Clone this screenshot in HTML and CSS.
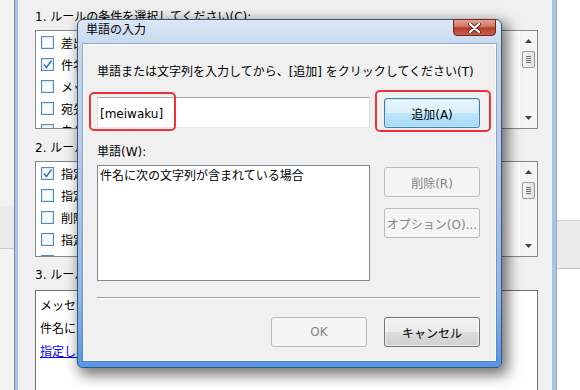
FILE: index.html
```html
<!DOCTYPE html>
<html lang="ja">
<head>
  <meta charset="UTF-8">
  <title>仕分けルール - 単語の入力</title>
  <link rel="stylesheet" href="styles.css">
</head>
<body>

<div class="screen">
  <div class="edge edge-left"><div class="band band-left"></div></div>

  <div class="parent">
    <div class="parent-inner">
      <p class="step">1. ルールの条件を選択してください(C):</p>
      <div class="listbox list-conditions">
        <ul class="items">
          <li><span class="check"></span>差出人が [名前/パブリック グループ] の場合</li>
          <li><span class="check"><svg width="11" height="11" viewBox="0 0 11 11"><path d="M2 5.5 L4.5 8.5 L9.5 1.5" fill="none" stroke="#3d68b0" stroke-width="1.4"/></svg></span>件名に [特定の文字] が含まれる場合</li>
          <li><span class="check"></span>メッセージ本文に [特定の文字] が含まれる場合</li>
          <li><span class="check"></span>宛先に [名前/パブリック グループ] が含まれる場合</li>
          <li><span class="check"></span>自分だけに送信された場合</li>
        </ul>
        <div class="vscroll">
          <div class="arrow"><svg width="7" height="4" viewBox="0 0 7 4"><path d="M0 4 L3.5 0 L7 4 Z" fill="#444"/></svg></div>
          <div class="track"><div class="thumb"></div></div>
          <div class="arrow"><svg width="7" height="4" viewBox="0 0 7 4"><path d="M0 0 L3.5 4 L7 0 Z" fill="#444"/></svg></div>
        </div>
      </div>

      <p class="step step-next">2. ルールの処理を選択してください(W):</p>
      <div class="listbox list-actions">
        <ul class="items">
          <li><span class="check"><svg width="11" height="11" viewBox="0 0 11 11"><path d="M2 5.5 L4.5 8.5 L9.5 1.5" fill="none" stroke="#3d68b0" stroke-width="1.4"/></svg></span>指定フォルダへ移動する</li>
          <li><span class="check"></span>指定フォルダへコピーする</li>
          <li><span class="check"></span>削除する</li>
          <li><span class="check"></span>指定した人または配布リストに転送する</li>
          <li><span class="check"></span>指定した人に添付ファイルとして転送する</li>
        </ul>
        <div class="vscroll">
          <div class="arrow"><svg width="7" height="4" viewBox="0 0 7 4"><path d="M0 4 L3.5 0 L7 4 Z" fill="#444"/></svg></div>
          <div class="track"><div class="thumb"></div></div>
          <div class="arrow"><svg width="7" height="4" viewBox="0 0 7 4"><path d="M0 0 L3.5 4 L7 0 Z" fill="#444"/></svg></div>
        </div>
      </div>

      <p class="step step-next">3. ルールの説明を編集してください (下線部をクリックして編集します)(D):</p>
      <div class="summary">
        <p>メッセージ受信時にルールを適用する</p>
        <p>件名に <a href="#">特定の文字</a> が含まれる場合</p>
        <p><a href="#">指定したフォルダー</a> へ移動する</p>
      </div>
    </div>
  </div>

  <div class="edge edge-right"><div class="band band-right"></div></div>

  <div class="dialog">
    <div class="titlebar">
      <span class="title">単語の入力</span>
      <button class="close">
        <svg width="13" height="10" viewBox="0 0 13 10">
          <path d="M2 1 L11 9 M11 1 L2 9" stroke="#5a2a22" stroke-width="4" stroke-linecap="round"/>
          <path d="M2 1 L11 9 M11 1 L2 9" stroke="#fff" stroke-width="2.2" stroke-linecap="round"/>
        </svg>
      </button>
    </div>

    <div class="client">
      <p class="prompt">単語または文字列を入力してから、[追加] をクリックしてください(T)</p>

      <div class="entry-row">
        <div class="marked">
          <input class="textbox" type="text" value="[meiwaku]">
          <span class="mark mark-input"></span>
        </div>
        <div class="marked">
          <button class="btn btn-default">追加(A)</button>
          <span class="mark mark-add"></span>
        </div>
      </div>

      <p class="words-label">単語(W):</p>
      <div class="list-row">
        <div class="wordlist">件名に次の文字列が含まれている場合</div>
        <div class="side-buttons">
          <button class="btn" disabled>削除(R)</button>
          <button class="btn" disabled>オプション(O)...</button>
        </div>
      </div>

      <div class="separator"></div>

      <div class="footer">
        <button class="btn" disabled>OK</button>
        <button class="btn">キャンセル</button>
      </div>
    </div>
  </div>
</div>

</body>
</html>
```

FILE: styles.css
```css
* { box-sizing: border-box; }

body {
  margin: 0;
  background-color: #f4f4f4;
  font-family: "DejaVu Sans", "Noto Sans CJK JP", sans-serif;
  font-size: 12px;
  color: #000;
}

p { margin: 0; }

.screen {
  position: relative;
  display: flex;
  width: 580px;
  height: 390px;
  overflow: hidden;
}

/* desktop behind the rules window */
.edge-left { width: 14px; background: #f3f3f3; }
.edge-right { flex: 1; background: #fff; }
.band { background: #ebebeb; border-bottom: 1px solid #c8c8c8; }
.band-left { margin-top: 206px; height: 43px; }
.band-right { margin-top: 220px; height: 49px; border-top: 1px solid #d0d0d0; }

/* rules wizard window */
.parent {
  width: 543px;
  border-left: 1px solid #7f8a99;
  border-right: 1px solid #a0a8b4;
  background: #a9c2e9;
  padding: 0 4px 0 3px;
}

.parent-inner {
  height: 100%;
  background: #f0f0f0;
  padding: 9px 14px 0 17px;
}

.step { line-height: 16px; white-space: nowrap; }
.step-next { margin-top: 11px; }

.listbox {
  display: flex;
  margin-top: 5px;
  border: 1px solid #828790;
  background: #fff;
  overflow: hidden;
}

.list-conditions { height: 99px; }
.list-actions { height: 96px; }
.list-actions + .step { margin-top: 10px; }

.items {
  flex: 1;
  list-style: none;
  margin: 0;
  padding: 0 0 0 5px;
  overflow: hidden;
}

.items li {
  display: flex;
  align-items: center;
  gap: 7px;
  height: 22px;
  white-space: nowrap;
}

.check {
  display: flex;
  align-items: center;
  justify-content: center;
  width: 13px;
  height: 13px;
  border: 1px solid #4f8cc4;
  background: linear-gradient(135deg, #f4f8fc, #ffffff);
  box-shadow: inset 0 0 0 1px #dbe8f5;
}

.vscroll {
  display: flex;
  flex-direction: column;
  width: 17px;
  background: #f4f4f4;
}

.arrow {
  display: flex;
  align-items: center;
  justify-content: center;
  height: 20px;
}

.track { flex: 1; }

.thumb {
  position: relative;
  width: 13px;
  height: 17px;
  margin: 0 auto;
  border: 1px solid #9a9a9a;
  border-radius: 2px;
  background: linear-gradient(90deg, #f6f6f6, #e0e0e0);
}

.thumb::after {
  content: "";
  position: absolute;
  left: 3px;
  right: 3px;
  top: 4px;
  height: 7px;
  background: repeating-linear-gradient(180deg, #6f6f6f 0 1px, transparent 1px 2px);
}

.summary {
  height: 120px;
  margin-top: 7px;
  padding: 4px 0 0 4px;
  border: 1px solid #6f6f6f;
  background: #fff;
  line-height: 23px;
  white-space: nowrap;
}

.summary a { color: #0000ff; }

/* 単語の入力 dialog */
.dialog {
  position: absolute;
  left: 77px;
  top: 19px;
  width: 425px;
  height: 349px;
  display: flex;
  flex-direction: column;
  border: 1px solid #3a5679;
  border-radius: 6px 6px 5px 5px;
  background: linear-gradient(180deg, #dce7f5 0%, #c4d7ef 8%, #b3cbea 40%, #8db5ea 80%, #5596e6 100%);
  box-shadow: 4px 5px 14px 2px rgba(0, 0, 0, 0.55);
}

.titlebar {
  display: flex;
  height: 24px;
  padding: 0 5px 0 8px;
}

.title { padding-top: 2px; line-height: 16px; }

.close {
  display: flex;
  align-items: center;
  justify-content: center;
  width: 43px;
  height: 17px;
  margin: -1px 0 0 auto;
  padding: 0;
  border: 1px solid #6a2a21;
  border-radius: 0 0 4px 4px;
  background: linear-gradient(180deg, #e3a293 0%, #d07361 45%, #b8392a 52%, #c9604a 100%);
}

.client {
  height: 317px;
  margin: 0 5px;
  padding: 19px 14px 0 13px;
  border: 1px solid #f7faff;
  box-shadow: 0 0 0 1px rgba(60, 90, 130, 0.35);
  background: #f0f0f0;
}

.prompt { line-height: 16px; white-space: nowrap; }

.entry-row {
  display: flex;
  gap: 14px;
  margin-top: 17px;
}

.marked { position: relative; }

.textbox {
  display: block;
  width: 273px;
  height: 31px;
  margin: 0;
  padding: 2px 2px 0;
  border: 1px solid;
  border-color: #abadb3 #dbdfe6 #e3e9ef #e2e3ea;
  background: #fff;
  font: inherit;
  line-height: 16px;
}

/* red annotation frames */
.mark {
  position: absolute;
  border: 2px solid #e9343c;
  border-radius: 5px;
}

.mark-input { left: -8px; top: -5px; width: 87px; height: 39px; }
.mark-add { left: -9px; top: -7px; width: 116px; height: 42px; }

.btn {
  display: block;
  width: 96px;
  height: 30px;
  padding: 0;
  border: 1px solid #707070;
  border-radius: 3px;
  background: linear-gradient(180deg, #f2f2f2 0%, #ebebeb 50%, #dddddd 50%, #cfcfcf 100%);
  box-shadow: inset 0 0 0 1px rgba(255, 255, 255, 0.7);
  font: inherit;
  color: #000;
}

.btn-default {
  margin-top: 1px;
  border-color: #3c7fb1;
  background: linear-gradient(180deg, #eaf6fd 0%, #d9f0fc 50%, #bee6fd 50%, #a7d9f5 100%);
  box-shadow: inset 0 0 0 1px #c4e6f9;
}

.btn:disabled {
  border-color: #b8bcbf;
  background: #f4f4f4;
  box-shadow: none;
  color: #858585;
}

.words-label { margin-top: 16px; line-height: 16px; }

.list-row {
  display: flex;
  gap: 14px;
  margin-top: 5px;
}

.wordlist {
  width: 273px;
  height: 116px;
  padding: 2px;
  border: 1px solid #828790;
  background: #fff;
  line-height: 16px;
}

.side-buttons {
  display: flex;
  flex-direction: column;
  gap: 11px;
  margin-top: 2px;
}

.separator {
  width: 383px;
  margin-top: 16px;
  border-top: 1px solid #a0a0a0;
  border-bottom: 1px solid #fff;
}

.footer {
  display: flex;
  justify-content: flex-end;
  gap: 17px;
  width: 383px;
  margin-top: 18px;
}
```
